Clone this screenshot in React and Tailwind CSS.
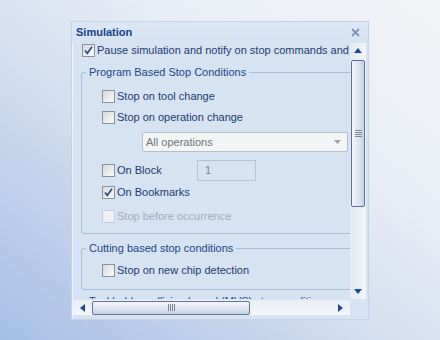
import clsx from "clsx";

function Check({ checked, disabled }) {
  return (
    <span
      className={clsx(
        "flex h-[13px] w-[13px] shrink-0 items-center justify-center border",
        disabled
          ? "border-[#c6cdd7] bg-[#edf1f6]"
          : "border-[#8e9296] bg-[linear-gradient(135deg,#d6d9dd,#f9fafb)]"
      )}
    >
      {checked && (
        <svg width="11" height="11" viewBox="0 0 11 11">
          <path d="M2 5.5 L4.3 8.3 L9 1.8" fill="none" stroke="#2d4a7e" strokeWidth="1.7" />
        </svg>
      )}
    </span>
  );
}

function Row({ label, checked, disabled, className }) {
  return (
    <div className={clsx("flex h-[21px] items-center", className)}>
      <Check checked={checked} disabled={disabled} />
      <span className={clsx("ml-[2px] whitespace-nowrap", disabled ? "text-[#a3adbb]" : "text-[#1f3b70]")}>
        {label}
      </span>
    </div>
  );
}

function Group({ legend, className, children }) {
  return (
    <fieldset className={clsx("ml-[9px] w-[290px] rounded-[3px] border border-[#a9bdd8] p-0", className)}>
      <legend className="ml-[4px] px-[3px] leading-[13px] whitespace-nowrap text-[#1c4688]">{legend}</legend>
      {children}
    </fieldset>
  );
}

function Arrow({ dir }) {
  const pts = {
    up: "0,5 4,0 8,5",
    down: "0,0 8,0 4,5",
    left: "5,0 5,8 0,4",
    right: "0,0 5,4 0,8",
  }[dir];
  const horiz = dir === "left" || dir === "right";
  return (
    <svg width={horiz ? 5 : 8} height={horiz ? 8 : 5} viewBox={horiz ? "0 0 5 8" : "0 0 8 5"}>
      <polygon points={pts} fill="#1d4a94" />
    </svg>
  );
}

export default function App() {
  return (
    <div className="min-h-[340px] w-[440px] bg-[linear-gradient(to_top_right,#a6bfe3_0%,#cfdbee_38%,#e9eef6_68%,#f3f4f7_100%)] pl-[71px] pt-[21px] font-['Liberation_Sans',Arial,sans-serif] text-[11px]">
      <div className="flex h-[299px] w-[298px] flex-col border border-[#c2d3ea] bg-[#d5e3f3] shadow-[inset_1px_1px_0_#eef4fb]">
        {/* title */}
        <div className="flex h-[21px] items-center justify-between pl-[4px] pr-[8px] bg-[linear-gradient(#dbe7f6,#d5e3f3)]">
          <span className="font-bold text-[#15428b]">Simulation</span>
          <svg width="9" height="9" viewBox="0 0 9 9">
            <path d="M1 1 L8 8 M8 1 L1 8" stroke="#7f95b5" strokeWidth="1.8" />
          </svg>
        </div>

        {/* body */}
        <div className="flex h-[256px]">
          <div className="w-[278px] overflow-hidden">
            <div className="flex h-[15px] items-center pl-[10px]">
              <Check checked />
              <span className="ml-[2px] whitespace-nowrap text-[#1f3b70]">
                Pause simulation and notify on stop commands and comments
              </span>
            </div>

            <Group legend="Program Based Stop Conditions" className="mt-[8px]">
              <div className="pb-[6px] pl-[20px] pt-[7px]">
                <Row label="Stop on tool change" />
                <Row label="Stop on operation change" />
                <div className="ml-[40px] mt-[4px] flex h-[20px] w-[206px] items-center justify-between rounded-[2px] border border-[#b5bfcc] bg-[#f4f5f7] pl-[3px] pr-[6px] text-[#6f747a]">
                  <span>All operations</span>
                  <svg width="7" height="4" viewBox="0 0 7 4">
                    <polygon points="0,0 7,0 3.5,4" fill="#9aa1aa" />
                  </svg>
                </div>
                <div className="mt-[8px] flex h-[21px] items-center">
                  <Check />
                  <span className="ml-[2px] w-[80px] text-[#1f3b70]">On Block</span>
                  <div className="flex h-[21px] w-[59px] items-center border border-[#b8c3d1] pl-[7px] text-[#7b838e]">1</div>
                </div>
                <Row label="On Bookmarks" checked className="mt-[1px]" />
                <Row label="Stop before occurrence" disabled className="mt-[3px]" />
              </div>
            </Group>

            <Group legend="Cutting based stop conditions" className="mt-[8px]">
              <div className="pb-[8px] pl-[20px] pt-[5px]">
                <Row label="Stop on new chip detection" />
              </div>
            </Group>

            <Group legend="Tool holder collision based (MVS) stop conditions" className="mt-[5px]">
              <div className="h-[30px]" />
            </Group>
          </div>

          {/* vertical scrollbar */}
          <div className="flex w-[16px] flex-col bg-[linear-gradient(to_right,#e4eaf3,#f3f6fa)]">
            <div className="flex h-[15px] items-center justify-center">
              <Arrow dir="up" />
            </div>
            <div className="mx-[1px] mt-[2px] flex h-[147px] items-center justify-center rounded-[2px] border border-[#5f6b9e] bg-[linear-gradient(to_right,#f3f6fa,#dfe6f0_50%,#c8d4e5)]">
              <div className="flex flex-col gap-[1px]">
                <div className="h-px w-[7px] bg-[#7e8796]" />
                <div className="h-px w-[7px] bg-[#7e8796]" />
                <div className="h-px w-[7px] bg-[#7e8796]" />
                <div className="h-px w-[7px] bg-[#7e8796]" />
              </div>
            </div>
            <div className="flex-1" />
            <div className="mb-[1px] flex h-[14px] items-center justify-center">
              <Arrow dir="down" />
            </div>
          </div>
        </div>

        {/* horizontal scrollbar */}
        <div className="h-[20px] pt-[1px]">
          <div className="flex h-[15px] w-[278px] items-center bg-[linear-gradient(#e9eef6,#f3f6fa)]">
            <div className="flex w-[18px] justify-center pl-[2px]">
              <Arrow dir="left" />
            </div>
            <div className="ml-[2px] flex h-[14px] w-[158px] items-center justify-center rounded-[2px] border border-[#66739f] bg-[linear-gradient(#f3f6fa,#dfe6f0_50%,#c6d2e3)]">
              <div className="flex gap-[1px]">
                <div className="h-[7px] w-px bg-[#7e8796]" />
                <div className="h-[7px] w-px bg-[#7e8796]" />
                <div className="h-[7px] w-px bg-[#7e8796]" />
                <div className="h-[7px] w-px bg-[#7e8796]" />
              </div>
            </div>
            <div className="flex-1" />
            <div className="flex w-[20px] justify-center">
              <Arrow dir="right" />
            </div>
          </div>
        </div>
      </div>
    </div>
  );
}
